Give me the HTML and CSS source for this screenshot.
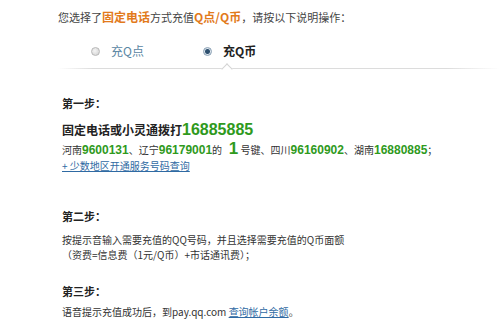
FILE: index.html
```html
<!DOCTYPE html>
<html lang="zh-CN">
<head>
  <meta charset="UTF-8" />
  <title>固定电话充值说明</title>
  <link rel="stylesheet" href="styles.css">
</head>
<body>
  <div class="page">
    <p class="intro">您选择了<b class="hl">固定电话</b>方式充值<b class="hl">Q点/Q币</b>，请按以下说明操作：</p>

    <div class="tabs">
      <label class="tab"><span class="radio"></span>充Q点</label>
      <label class="tab active"><span class="radio checked"></span>充Q币</label>
      <span class="notch"></span>
    </div>

    <div class="steps">
      <h3 class="step-title first">第一步：</h3>
      <p class="dial">固定电话或小灵通拨打<span class="num big">16885885</span></p>
      <p class="small">河南<span class="num">9600131</span>、辽宁<span class="num">96179001</span>的&nbsp;&nbsp;&nbsp;<span class="num key">1</span>&nbsp;号键、四川<span class="num">96160902</span>、湖南<span class="num">16880885</span>；</p>
      <p class="small"><a href="#">+ 少数地区开通服务号码查询</a></p>

      <h3 class="step-title second">第二步：</h3>
      <p class="small gap">按提示音输入需要充值的QQ号码，并且选择需要充值的Q币面额</p>
      <p class="small">（资费=信息费（1元/Q币）+市话通讯费）；</p>

      <h3 class="step-title third">第三步：</h3>
      <p class="small gap-s">语音提示充值成功后，到pay.qq.com <a href="#">查询帐户余额</a>。</p>
    </div>
  </div>
</body>
</html>
```

FILE: styles.css
```css
body {
  margin: 0;
  background: #fff;
  color: #333;
  font-family: "Noto Sans CJK SC", "Liberation Sans", sans-serif;
}
p, h3 {
  margin: 0;
}
.page {
  padding: 9px 0 0 58px;
}
.intro {
  font-size: 11px;
  line-height: 16px;
  color: #444;
}
.intro .hl {
  font-size: 12px;
  color: #e27a1c;
}
.tabs {
  position: relative;
  display: flex;
  margin-top: 16px;
  padding-bottom: 8px;
  height: 20px;
  background: linear-gradient(to right, rgba(220,220,220,0), #dcdcdc 8%, #dcdcdc 88%, rgba(220,220,220,0)) no-repeat left bottom / 100% 1px;
}
.tab {
  display: flex;
  align-items: center;
  gap: 11px;
  font-size: 12px;
  line-height: 20px;
  color: #5a86a3;
  margin-left: 33px;
}
.tab.active {
  margin-left: 59px;
  font-weight: bold;
  color: #222;
}
.radio {
  display: inline-block;
  width: 9px;
  height: 9px;
  border: 1px solid #b8b8b8;
  border-radius: 50%;
  background: radial-gradient(circle at 40% 40%, #f4f4f4, #cfcfcf);
  box-sizing: border-box;
}
.radio.checked {
  border-color: #8aa0b4;
  background: radial-gradient(circle, #2d4f6e 0, #2d4f6e 2px, #dde6ee 3px, #c8d3dd);
}
.notch {
  position: absolute;
  left: 165px;
  bottom: -4px;
  width: 7px;
  height: 7px;
  background: #fff;
  border-top: 1px solid #d4d4d4;
  border-left: 1px solid #d4d4d4;
  transform: rotate(45deg);
}
.steps {
  padding-left: 4px;
}
.step-title {
  font-size: 11px;
  line-height: 16px;
  color: #222;
}
.step-title.first {
  margin-top: 26px;
}
.step-title.second {
  margin-top: 34px;
}
.step-title.third {
  margin-top: 21px;
}
.dial {
  margin-top: 8px;
  font-size: 12px;
  font-weight: bold;
  line-height: 22px;
  color: #222;
}
.small {
  font-size: 10px;
  line-height: 16px;
  color: #333;
}
.gap {
  margin-top: 8px;
  line-height: 15px;
}
.gap + .small {
  line-height: 15px;
}
.gap-s {
  margin-top: 5px;
}
.num {
  font-family: "Liberation Sans", sans-serif;
  font-size: 12px;
  font-weight: bold;
  color: #2f9a1d;
}
.num.big {
  font-size: 16px;
}
.num.key {
  font-size: 17px;
}
a {
  color: #2f6aa3;
}
```
